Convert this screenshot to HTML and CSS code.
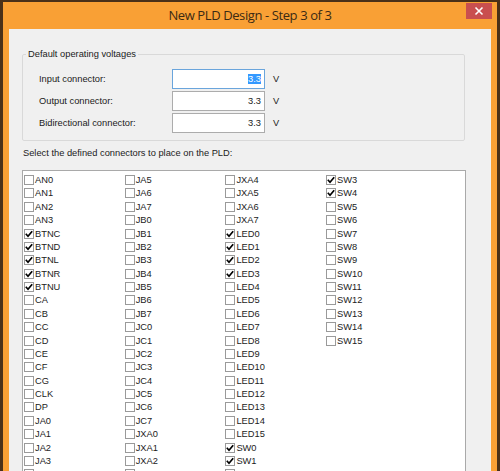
FILE: index.html
```html
<!DOCTYPE html>
<html>
<head>
<meta charset="utf-8">
<link rel="stylesheet" href="styles.css">
</head>
<body>
<div class="window">
  <div class="titlebar">
    <div class="spacer"></div>
    <div class="title">New PLD Design - Step 3 of 3</div>
    <div class="closecell">
      <div class="closebtn"><svg class="closeicon" width="10" height="10" viewBox="0 0 10 10"><path d="M1.5 1.5 L8.5 8.5 M8.5 1.5 L1.5 8.5" stroke="#ffffff" stroke-width="1.6" fill="none"/></svg></div>
    </div>
  </div>
  <div class="content">
    <fieldset class="group">
      <legend>Default operating voltages</legend>
      <div class="field"><label>Input connector:</label><span class="input focus"><span class="sel">3.3</span></span><span class="unit">V</span></div>
      <div class="field"><label>Output connector:</label><span class="input">3.3</span><span class="unit">V</span></div>
      <div class="field"><label>Bidirectional connector:</label><span class="input">3.3</span><span class="unit">V</span></div>
    </fieldset>
    <p class="prompt">Select the defined connectors to place on the PLD:</p>
    <div class="list" id="list"></div>
  </div>
</div>
<script src="app.js"></script>
</body>
</html>
```

FILE: app.js
```js
const cols = [
  ["AN0","AN1","AN2","AN3","*BTNC","*BTND","*BTNL","*BTNR","*BTNU","CA","CB","CC","CD","CE","CF","CG","CLK","DP","JA0","JA1","JA2","JA3","JA4"],
  ["JA5","JA6","JA7","JB0","JB1","JB2","JB3","JB4","JB5","JB6","JB7","JC0","JC1","JC2","JC3","JC4","JC5","JC6","JC7","JXA0","JXA1","JXA2","JXA3"],
  ["JXA4","JXA5","JXA6","JXA7","*LED0","*LED1","*LED2","*LED3","LED4","LED5","LED6","LED7","LED8","LED9","LED10","LED11","LED12","LED13","LED14","LED15","*SW0","*SW1","SW2"],
  ["*SW3","*SW4","SW5","SW6","SW7","SW8","SW9","SW10","SW11","SW12","SW13","SW14","SW15"]
];
const list = document.getElementById('list');
const tick = '<svg width="8" height="8" viewBox="0 0 8 8"><path d="M0.8 3.8 L3 6.2 L7.2 1.2" stroke="#000" stroke-width="1.7" fill="none"/></svg>';
cols.forEach(c => {
  const col = document.createElement('div');
  col.className = 'col';
  c.forEach(name => {
    const on = name[0] === '*';
    const label = on ? name.slice(1) : name;
    const item = document.createElement('div');
    item.className = 'item';
    item.innerHTML = '<span class="cb' + (on ? ' on' : '') + '">' + (on ? tick : '') + '</span><span class="lbl">' + label + '</span>';
    col.appendChild(item);
  });
  list.appendChild(col);
});
```

FILE: styles.css
```css
html, body {
  margin: 0;
  padding: 0;
}
body {
  width: 500px;
  height: 471px;
  overflow: hidden;
  background: #4a3018;
  padding: 2px 3px 0 3px;
  box-sizing: border-box;
  font-family: "Liberation Sans", Arial, sans-serif;
  font-size: 9.3px;
  color: #1b1b1b;
}
.window {
  background: #f9a035;
  height: 100%;
  display: flex;
  flex-direction: column;
}
.titlebar {
  height: 27px;
  flex: none;
  display: grid;
  grid-template-columns: 1fr auto 1fr;
}
.title {
  font-family: "Open Sans", "Noto Sans", sans-serif;
  font-size: 13px;
  letter-spacing: -0.4px;
  color: #3b2a14;
  line-height: 27px;
}
.closecell {
  display: flex;
  justify-content: flex-end;
  align-items: flex-start;
  padding: 1px 5px 0 0;
}
.closebtn {
  width: 26px;
  height: 16px;
  background: #c94f4f;
  display: grid;
  place-items: center;
}
.closeicon {
  display: block;
}
.content {
  flex: 1;
  margin: 0 6px;
  background: #f0f0f0;
  padding-top: 19px;
  overflow: hidden;
}
.group {
  margin: 0 26px 0 13px;
  padding: 0 0 7px 0;
  border: 1px solid #d9d9d9;
  border-radius: 2px;
  min-width: 0;
}
.group legend {
  margin-left: 3px;
  padding: 0 2px;
  line-height: 12px;
}
.field {
  display: flex;
  align-items: center;
  height: 20px;
  margin-top: 2.2px;
}
.field:first-of-type {
  margin-top: 9px;
}
.field label {
  width: 133px;
  margin-left: 16px;
}
.input {
  width: 93px;
  height: 20px;
  box-sizing: border-box;
  border: 1px solid #acacac;
  background: #fff;
  display: flex;
  align-items: center;
  justify-content: flex-end;
  padding-right: 3px;
}
.input.focus {
  border-color: #6aa5dc;
}
.sel {
  background: #3399ff;
  color: #fff;
}
.unit {
  margin-left: 8px;
}
.prompt {
  margin: 6px 0 11px 14px;
  line-height: 12px;
}
.list {
  margin: 0 25px 0 13px;
  border: 1px solid #a9a9a9;
  background: #fff;
  padding: 2px 0 0 1px;
  display: flex;
  height: 400px;
}
.col {
  width: 100.7px;
  display: flex;
  flex-direction: column;
}
.item {
  height: 13.38px;
  display: flex;
  align-items: center;
}
.cb {
  width: 10px;
  height: 10px;
  box-sizing: border-box;
  border: 1px solid #9a9a9a;
  background: #fff;
  display: flex;
  align-items: center;
  justify-content: center;
  margin-right: 1px;
}
.lbl {
  line-height: 12px;
}
```
